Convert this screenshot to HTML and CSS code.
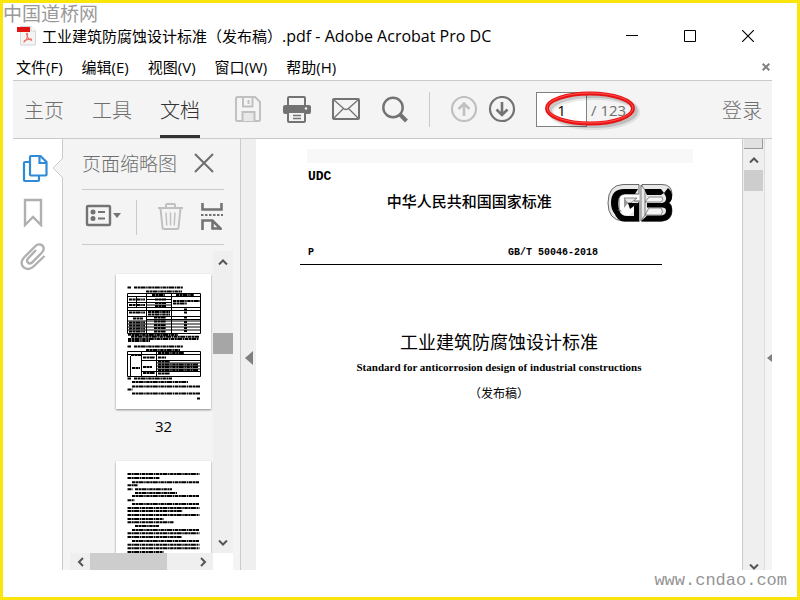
FILE: index.html
```html
<!DOCTYPE html>
<html lang="zh-CN">
<head>
	<meta charset="utf-8">
	<title>工业建筑防腐蚀设计标准（发布稿）.pdf - Adobe Acrobat Pro DC</title>
	<link rel="stylesheet" href="styles.css">
</head>
<body>

	<div class="frame">

		<div class="watermark-top">中国道桥网</div>

		<div class="app">

			<!-- 标题栏 -->
			<div class="titlebar">
				<svg class="pdf-icon" width="20" height="20" viewBox="0 0 20 20">
					<path d="M3.500 .5h10.500l4.500 4.500v14h-15z" fill="#f4f4f4" stroke="#d6d6d6"/>
					<path d="M14 .5v4.500h4.500" fill="#fff" stroke="#d6d6d6"/>
					<path d="M6.500 16.500c2.500-1.500 4-5 4-8.500-.2-1.400-1.200-1-.8.6.7 3 2.400 5 5.300 5.900M7 15c2-1.500 4.500-2.200 8-1.800" fill="none" stroke="#f0706c" stroke-width="1.200"/>
					<path d="M0 1h13v5H0z" fill="#e11414"/>
				</svg>
				<h1 class="title">工业建筑防腐蚀设计标准（发布稿）<span class="latin">.pdf - Adobe Acrobat Pro DC</span></h1>
				<div class="win-buttons">
					<button type="button" aria-label="最小化"><svg width="12" height="12"><path d="M0 5.500h12" stroke="#000"/></svg></button>
					<button type="button" aria-label="最大化"><svg width="12" height="12"><path d="M.5 .5h11v11h-11z" fill="none" stroke="#000"/></svg></button>
					<button type="button" aria-label="关闭"><svg width="12" height="12"><path d="M0 0l12 12M12 0L0 12" stroke="#000" stroke-width="1.200"/></svg></button>
				</div>
			</div>

			<!-- 菜单栏 -->
			<div class="menubar">
				<button type="button">文件(F)</button>
				<button type="button">编辑(E)</button>
				<button type="button">视图(V)</button>
				<button type="button">窗口(W)</button>
				<button type="button">帮助(H)</button>
				<button type="button" class="doc-close" aria-label="关闭文档"><svg width="8" height="8"><path d="M.7 .7l6.600 6.600M7.300 .7L.7 7.300" stroke="#808080" stroke-width="2"/></svg></button>
			</div>

			<!-- 工具栏 -->
			<div class="toolbar">
				<nav class="tabs">
					<a href="#home">主页</a>
					<a href="#tools">工具</a>
					<a href="#document" class="active">文档</a>
				</nav>
				<div class="tools">
					<button type="button" class="off" aria-label="保存">
						<svg width="28" height="28" viewBox="0 0 28 28" fill="none" stroke="currentColor" stroke-width="2">
							<path d="M3.500 1h17.500l5 5v17.500q0 1.500-1.500 1.500h-21q-1.500 0-1.500-1.500v-21q0-1.500 1.500-1.500z"/>
							<path d="M9 1v9.500h9.500V1M14.500 4v4"/>
							<path d="M8.500 25v-9h12v9" fill="#e8e8e8"/>
						</svg>
					</button>
					<button type="button" aria-label="打印">
						<svg width="28" height="28" viewBox="0 0 28 28" fill="none" stroke="currentColor" stroke-width="2">
							<path d="M5 10V2q0-1 1-1h15q1 0 1 1v8"/>
							<path d="M2 9h24q2 0 2 2v5q0 2-2 2h-24q-2 0-2-2v-5q0-2 2-2z" fill="currentColor" stroke="none"/>
							<path d="M5 16h17v9q0 1-1 1H6q-1 0-1-1z" fill="#f4f4f4"/>
							<path d="M5 12h17v4H5z" fill="currentColor" stroke="none"/>
							<circle cx="23" cy="12.500" r="1.200" fill="#f4f4f4" stroke="none"/>
							<path d="M10 19.500h8M10 22.500h8" stroke-width="1.300"/>
						</svg>
					</button>
					<button type="button" aria-label="邮件">
						<svg width="28" height="28" viewBox="0 0 28 28" fill="none" stroke="currentColor">
							<rect x="1" y="3" width="26" height="20" rx="1" stroke-width="2"/>
							<path d="M2 4l9 8q3 3 6 0l9-8M2 22l9.500-9.500M26 22l-9.500-9.500" stroke-width="1.300"/>
						</svg>
					</button>
					<button type="button" aria-label="查找">
						<svg width="28" height="28" viewBox="0 0 28 28" fill="none" stroke="currentColor">
							<circle cx="12" cy="11.500" r="9.700" stroke-width="2.400"/>
							<path d="M18.500 18l7 7" stroke-width="4"/>
						</svg>
					</button>
				</div>
				<div class="pager">
					<button type="button" class="off" aria-label="上一页">
						<svg width="28" height="28" viewBox="0 0 28 28" fill="none" stroke="currentColor" stroke-width="2.200">
							<circle cx="14" cy="13" r="12"/>
							<path d="M14 20V8M8.500 13l5.500-5.500 5.500 5.500" stroke-width="2.600"/>
						</svg>
					</button>
					<button type="button" aria-label="下一页">
						<svg width="28" height="28" viewBox="0 0 28 28" fill="none" stroke="currentColor" stroke-width="2.200">
							<circle cx="14" cy="13" r="12"/>
							<path d="M14 6v12M8.500 13.500l5.500 5.500 5.500-5.500" stroke-width="2.600"/>
						</svg>
					</button>
					<div class="page-no">
						<input type="text" id="page" value="1">
						<label for="page">/ 123</label>
						<svg class="circle-mark" width="104" height="46" viewBox="0 0 104 46">
							<ellipse cx="56" cy="25" rx="43" ry="15" fill="none" stroke="#000" stroke-opacity=".08" stroke-width="6"/>
							<ellipse cx="55" cy="24" rx="43" ry="15" fill="none" stroke="#000" stroke-opacity=".15" stroke-width="4"/>
							<ellipse cx="52" cy="21.500" rx="43" ry="15" fill="none" stroke="#e81212" stroke-width="4"/>
							<ellipse cx="52" cy="21" rx="43" ry="15" fill="none" stroke="#ff5050" stroke-width="1"/>
						</svg>
					</div>
				</div>
				<a href="#login" class="login">登录</a>
			</div>

			<div class="main">

				<!-- 左侧导航 -->
				<div class="rail">
					<button type="button" class="on" aria-label="页面缩略图">
						<svg width="28" height="30" viewBox="0 0 28 30" fill="none" stroke="currentColor" stroke-width="2.200">
							<path d="M9 9H5q-1 0-1 1v17q0 1 1 1h13q1 0 1-1v-4"/>
							<path d="M11 3h9.500l6 6v12.500q0 1-1 1H11q-1 0-1-1V4q0-1 1-1z"/>
							<path d="M19.500 3v7h7"/>
						</svg>
					</button>
					<button type="button" aria-label="书签">
						<svg width="28" height="30" viewBox="0 0 28 30" fill="none" stroke="currentColor" stroke-width="2.400">
							<path d="M5 3h16v25l-8-8-8 8z"/>
						</svg>
					</button>
					<button type="button" aria-label="附件">
						<svg width="28" height="30" viewBox="0 0 28 30" fill="none" stroke="currentColor" stroke-width="2.400">
							<path d="M16 9l-8 8.500c-2.500 3 1 6.500 4 4L22 11.500c5-5.500-2-11-6.500-6.500L4 16.500c-7 8 3 15.500 9.500 9L24.500 15"/>
						</svg>
					</button>
					<svg class="notch" width="11" height="20"><path d="M11 0L1 10l10 10" fill="#f4f4f4" stroke="#cdcdcd"/></svg>
				</div>

				<!-- 缩略图面板 -->
				<div class="panel">
					<div class="panel-head">
						<h2>页面缩略图</h2>
						<button type="button" aria-label="关闭面板"><svg width="20" height="20"><path d="M1 1l18 18M19 1L1 19" stroke="#6e6e6e" stroke-width="2"/></svg></button>
					</div>
					<div class="panel-tools">
						<button type="button" aria-label="选项">
							<svg width="39" height="28" viewBox="0 0 39 28" fill="none" stroke="currentColor">
								<rect x="5" y="3" width="23" height="19" rx="1" stroke-width="2.400"/>
								<path d="M16 9h7M16 15.500h7" stroke-width="2"/>
								<circle cx="11" cy="9" r="2.500" fill="currentColor" stroke="none"/>
								<circle cx="11" cy="15.500" r="2.500" fill="currentColor" stroke="none"/>
								<path d="M31 10h8l-4 5z" fill="currentColor" stroke="none"/>
							</svg>
						</button>
						<button type="button" class="off" aria-label="删除">
							<svg width="28" height="28" viewBox="0 0 28 28" fill="none" stroke="currentColor">
								<path d="M1 5h25M9 5V2q0-1 1-1h7q1 0 1 1v3M3.500 5.500l2 19q0 1.500 1.500 1.500h13q1.500 0 1.500-1.500l2-19" stroke-width="2"/>
								<path d="M9 9.500l.8 13M13.500 9.500v13M18 9.500l-.8 13" stroke-width="1.500"/>
							</svg>
						</button>
						<button type="button" aria-label="拆分">
							<svg width="24" height="28" viewBox="0 0 24 28" fill="none" stroke="currentColor" stroke-width="2.600">
								<path d="M2.500 0v6.500h19V0M2.500 27v-9.500h10l8 8V27M12.500 18v7.500h9"/>
								<path d="M1 12h22" stroke-width="2" stroke-dasharray="2.500 1.500"/>
							</svg>
						</button>
					</div>

					<div class="thumbs">
						<div class="thumb-list">
							<a href="#p32" class="thumb" aria-label="第 32 页">
								<svg viewBox="0 0 95 135">
									<g fill="none" stroke="#000" stroke-width="2" stroke-dasharray="3.500 .5 2.200 .4 5 .6 1.500 .5">
										<path d="M11.500 13.500h3.500M18 13.500h49M30 17.500h36"/>
										<path d="M13 25.500h16M13 31h16M13 38.500h16M17 44.500h10M13 48.500h16M13 51.500h16M13 54.500h16M13 57.500h16"/>
										<path d="M36 21h13M60 21h18M39 25.500h11M39 29h11M39 32h11M32 38h22M32 40.500h22M38 43.500h12M38 47.500h12M38 51h12M38 54h12M38 57.500h12"/>
										<path d="M57 27h27M57 29.500h14M68 35.500h3M68 38.500h3M68 43.500h3M68 48h3M68 51h3M68 54h3M68 57h3"/>
										<path d="M12 60.800h50M15 62.800h68M12 65h71M12 67h22"/>
										<path d="M11.500 72.500h3.500M18 72.500h49M30 76h34"/>
										<path d="M15 81h10M27 83.500h12M42 83.500h8M16 94h8M27 93h9M27 99h12M42 79h26M42 87.500h12M42 90.500h40M42 93h40M42 96h40M42 99.500h12"/>
										<path d="M11.500 104.500h3.500M18 104.500h38M16 108h56M16 112.500h68M11.500 115.500h5M16 119.500h68M81 124.500h3"/>
									</g>
									<g fill="none" stroke="#000">
										<path d="M11.500 19.500h73v40h-73zM30.500 19.500v40M55.500 19.500v40M11.500 22.500h73M11.500 28.500h44M11.500 33.500h73M11.500 36.500h73M11.500 42.500h73M30.500 45.500h54M11.500 47h73M11.500 50h73M11.500 53h73M11.500 56h73M20.500 22.500v11M30.500 25.500h25M30.500 31h25"/>
										<path d="M11.500 77.500h73v25h-73zM25.500 77.500v25M40.500 77.500v25M14.500 82v20M11.500 80.500h73M25.500 86.500h59M40.500 89h44M40.500 92h44M40.500 95h44M25.500 97.500h59"/>
									</g>
								</svg>
							</a>
							<div class="thumb-no">32</div>
							<a href="#p33" class="thumb" aria-label="第 33 页">
								<svg viewBox="0 0 95 135">
									<g fill="none" stroke="#000" stroke-width="2" stroke-dasharray="3.500 .5 2.200 .4 5 .6 1.500 .5">
										<path d="M11.500 13h72M11.500 17h32M16 21.300h67M11.500 24.300h10"/>
										<path d="M11.500 28.300h5M19 28.300h37M19 32h42M16 35h67M11.500 39.300h7"/>
										<path d="M16 43h67M11.500 47h72M11.500 50h55M11.500 54h72M11.500 58h36"/>
										<path d="M11.500 61.300h46M19 65h24M16 69h67M11.500 72.300h72M11.500 76h54"/>
										<path d="M16 80h67M11.500 83.700h72M11.500 87.300h72M11.500 91h36"/>
										<path d="M16 95h67M11.500 99h72M11.500 103h40"/>
									</g>
								</svg>
							</a>
						</div>
						<div class="vscroll">
							<button type="button" aria-label="向上"><svg width="10" height="6"><path d="M1 5.500l4-4 4 4" fill="none" stroke="#555" stroke-width="2"/></svg></button>
							<div class="track"><div class="bar bar-dark"></div></div>
							<button type="button" aria-label="向下"><svg width="10" height="6"><path d="M1 .5l4 4 4-4" fill="none" stroke="#555" stroke-width="2"/></svg></button>
						</div>
						<div class="hscroll">
							<button type="button" aria-label="向左"><svg width="7" height="10"><path d="M6 1L2 5l4 4" fill="none" stroke="#555" stroke-width="2"/></svg></button>
							<div class="track"><div class="bar"></div></div>
							<button type="button" aria-label="向右"><svg width="7" height="10"><path d="M1 1l4 4-4 4" fill="none" stroke="#555" stroke-width="2"/></svg></button>
						</div>
						<div class="corner"></div>
					</div>
				</div>

				<button type="button" class="splitter" aria-label="折叠面板"><svg width="8" height="14"><path d="M8 0v14L0 7z" fill="#808080"/></svg></button>

				<!-- 文档内容 -->
				<div class="doc">
					<div class="doc-strip"></div>
					<div class="doc-head">
						<div class="udc">UDC</div>
						<div class="nation">中华人民共和国国家标准</div>
						<svg class="gb" width="66" height="38" viewBox="0 0 66 38">
							<!-- 浅色斜面 -->
							<path d="M32 .5H16Q1 1 1 19q0 17 15 18h17V17H16v11l-4-2V14q1-4 6-4h14z" fill="#e8e8e8" stroke="#444" stroke-width=".8"/>
							<path d="M35 .5h20q10 0 10 10 0 6-3 8 3 2 3 8 0 10-10 10.500H35z" fill="#e8e8e8" stroke="#444" stroke-width=".8"/>
							<!-- 黑色斜面 -->
							<path d="M31 5l-3 5H17q-6 1-6 9 0 4 1 6l-4 5Q4 26 4 19 4 5 17 5z"/>
							<path d="M7 28l5-2q2 6 8 6h7V22l5-4v19.500H18Q10 37.500 7 28z"/>
							<path d="M37 5h17l3 4-3 2H40zM61 4q4 3 4 8 0 5-3 7 3 2 3 7 0 11-12 11.500H34l6-6h13q6 0 6-5 0-3-4-3H40V19h15q5-1 4-6l-2-4z"/>
							<!-- 中间 -->
							<path d="M15 14h12v13l-5 4h-5q-3-2-3-6z" fill="#fff"/>
							<path d="M17 14h13l-6 5h-4z" fill="#e8e8e8" stroke="#444" stroke-width=".6"/>
							<path d="M17 14v10l4-5z" fill="#999"/>
							<path d="M21 19h10l-8 6z"/>
							<path d="M42 13h13q2 3-1 5H38zM42 24h12q3 4 0 7H38z" fill="#f4f4f4" stroke="#444" stroke-width=".6"/>
							<path d="M34 1l4 5v25l-4 6z" fill="#e8e8e8" stroke="#333" stroke-width=".6"/>
							<path d="M32.500 1h1.500v36h-1.500z" fill="#aaa"/>
						</svg>
					</div>
					<div class="doc-code">
						<span>P</span>
						<span>GB/T 50046-2018</span>
					</div>
					<h2 class="doc-title">工业建筑防腐蚀设计标准</h2>
					<p class="doc-en">Standard for anticorrosion design of industrial constructions</p>
					<p class="doc-note">（发布稿）</p>
				</div>

				<div class="vscroll doc-scroll">
					<div class="split-box"></div>
					<button type="button" aria-label="向上滚动"><svg width="10" height="6"><path d="M1 5.500l4-4 4 4" fill="none" stroke="#555" stroke-width="2"/></svg></button>
					<div class="track"><div class="bar"></div></div>
					<button type="button" class="down" aria-label="向下滚动"><svg width="10" height="6"><path d="M1 .5l4 4 4-4" fill="none" stroke="#555" stroke-width="2"/></svg></button>
				</div>
				<button type="button" class="right-edge" aria-label="展开工具"><svg width="5" height="8"><path d="M5 0v8L0 4z" fill="#808080"/></svg></button>
			</div>
		</div>

		<div class="watermark-url">www.cndao.com</div>
	</div>

</body>
</html>
```
FILE: styles.css
```css
* {
	box-sizing: border-box;
}

body {
	margin: 0px;
	font-family: "Open Sans", "Noto Sans CJK SC", sans-serif;
	font-size: 15px;
	color: #000;
	background: #fff;
}

h1, h2, p {
	margin: 0px;
	font-weight: normal;
}

svg {
	display: block;
}

a {
	color: inherit;
	text-decoration: none;
}

button {
	display: flex;
	align-items: center;
	justify-content: center;
	margin: 0px;
	padding: 0px;
	border: none;
	background: none;
	font: inherit;
	color: #737373;
}

.off {
	color: #c0c0c0;
}

.frame {
	position: relative;
	display: flex;
	height: 100vh;
	padding: 17px 25px 27px 10px;
	border: 3px solid #fbe60b;
}

.app {
	flex: 1;
	min-width: 0;
	display: flex;
	flex-direction: column;
}

.watermark-top {
	position: absolute;
	top: 0px;
	left: 0px;
	font-family: "Noto Sans CJK SC", sans-serif;
	font-size: 19px;
	line-height: 20px;
	color: #999;
}

.watermark-url {
	position: absolute;
	right: 10px;
	bottom: 4px;
	font-family: "Liberation Mono", monospace;
	font-size: 17px;
	line-height: 24px;
	color: #949494;
}

/* 标题栏 */
.titlebar {
	display: flex;
	align-items: center;
	height: 32px;
	padding-left: 4px;
}

.title {
	flex: 1;
	padding-left: 5px;
	font-size: 15px;
	line-height: 20px;
	white-space: nowrap;
}

.latin {
	font-size: 16px;
}

.win-buttons {
	display: flex;
	gap: 46px;
	padding-right: 18px;
}

/* 菜单栏 */
.menubar {
	display: flex;
	align-items: center;
	gap: 19px;
	height: 29px;
	padding: 2px 2px 0px 3px;
	border-bottom: 1px solid #cacaca;
}

.menubar button {
	color: #000;
	line-height: 20px;
}

.menubar .doc-close {
	margin-left: auto;
}

/* 工具栏 */
.toolbar {
	display: flex;
	align-items: center;
	height: 58px;
	padding: 0px 10px 0px 11px;
	background: #f4f4f4;
	border-bottom: 1px solid #cacaca;
	color: #6e6e6e;
}

.tabs {
	display: flex;
	gap: 28px;
	align-self: stretch;
	font-size: 20px;
	font-weight: 300;
	line-height: 60px;
}

.tabs .active {
	color: #323232;
	border-bottom: 3px solid #323232;
}

.tools {
	display: flex;
	align-items: center;
	gap: 21px;
	height: 35px;
	padding: 0px 20px 0px 34px;
	border-right: 1px solid #cacaca;
}

.pager {
	display: flex;
	align-items: center;
	gap: 10px;
	padding-left: 20px;
}

.page-no {
	position: relative;
	display: flex;
	align-items: center;
	gap: 4px;
	margin-left: 10px;
}

.page-no input {
	width: 51px;
	height: 35px;
	padding: 0px;
	border: 1px solid #808080;
	border-radius: 0px;
	background: #fff;
	font: inherit;
	color: #000;
	text-align: center;
}

.circle-mark {
	position: absolute;
	top: -5px;
	left: 2px;
	pointer-events: none;
}

.login {
	margin-left: auto;
	font-size: 20px;
	font-weight: 300;
}

/* 主体 */
.main {
	flex: 1;
	min-height: 0;
	display: flex;
}

.rail {
	position: relative;
	display: flex;
	flex-direction: column;
	gap: 14px;
	width: 50px;
	padding: 14px 0px 0px 7px;
	border-right: 1px solid #cacaca;
}

.rail button {
	width: 28px;
	color: #b0b0b0;
}

.rail .on {
	color: #2f8ad8;
}

.notch {
	position: absolute;
	top: 19px;
	right: -1px;
}

.panel {
	display: flex;
	flex-direction: column;
	width: 178px;
	padding: 0px 7px;
	background: #f4f4f4;
	border-right: 1px solid #cacaca;
}

.panel-head {
	display: flex;
	align-items: center;
	gap: 17px;
	height: 51px;
	margin: 0px 9px 0px 12px;
	padding-bottom: 3px;
	border-bottom: 1px solid #cacaca;
	color: #6e6e6e;
}

.panel-head h2 {
	font-size: 19px;
	font-weight: 300;
	white-space: nowrap;
}

.panel-tools {
	display: flex;
	align-items: center;
	justify-content: space-between;
	height: 55px;
	margin: 0px 9px 6px 12px;
	border-bottom: 1px solid #cacaca;
}

.panel-tools .off {
	height: 35px;
	padding-left: 20px;
	border-left: 1px solid #cacaca;
}

.thumbs {
	flex: 1;
	min-height: 0;
	display: grid;
	grid-template-columns: 1fr 20px;
	grid-template-rows: 1fr 17px;
}

.thumb-list {
	display: flex;
	flex-direction: column;
	align-items: flex-end;
	padding: 23px 2px 0px 0px;
	overflow: hidden;
}

.thumb {
	flex: none;
	width: 95px;
	background: #fff;
	box-shadow: 0px 1px 2px #888;
}

.thumb-no {
	width: 95px;
	padding: 5px 0px 23px;
	line-height: 24px;
	text-align: center;
}

.corner {
	background: #fff;
}

.vscroll {
	display: flex;
	flex-direction: column;
	background: #efefef;
}

.vscroll button {
	height: 21px;
}

.vscroll .track {
	flex: 1;
	padding-top: 61px;
}

.vscroll .bar {
	height: 21px;
}

.hscroll {
	display: flex;
	background: #efefef;
}

.hscroll button {
	width: 20px;
}

.hscroll .track {
	flex: 1;
}

.hscroll .bar {
	width: 75%;
	height: 100%;
}

.bar {
	background: #cdcdcd;
}

.bar-dark {
	background: #a6a6a6;
}

.splitter {
	width: 15px;
	padding-top: 7px;
	background: #efefef;
}

/* 文档 */
.doc {
	flex: 1;
	min-width: 0;
	padding-top: 10px;
	background: #fff;
	text-align: center;
}

.doc-strip {
	height: 14px;
	margin: 0px 49px 0px 51px;
	background: #f8f8f8;
}

.doc-head {
	display: flex;
	justify-content: space-between;
	align-items: center;
	height: 76px;
	padding: 4px 69px 0px 52px;
}

.udc {
	align-self: flex-start;
	font-family: "Liberation Mono", monospace;
	font-size: 13px;
	font-weight: bold;
	line-height: 20px;
}

.nation {
	margin-top: -6px;
	font-family: "Noto Sans CJK SC", sans-serif;
	font-size: 15px;
	font-weight: 500;
}

.doc-code {
	display: flex;
	justify-content: space-between;
	margin: 0px 80px 0px 44px;
	padding: 5px 64px 2px 8px;
	border-bottom: 1px solid #000;
	font-family: "Liberation Mono", monospace;
	font-size: 10px;
	font-weight: bold;
	line-height: 18px;
}

.doc-title {
	padding-top: 63px;
	font-family: "Noto Sans CJK SC", sans-serif;
	font-size: 18px;
	line-height: 26px;
}

.doc-en {
	padding-top: 4px;
	font-family: "Liberation Serif", serif;
	font-size: 11px;
	font-weight: bold;
	line-height: 18px;
}

.doc-note {
	padding-top: 8px;
	font-family: "Noto Sans CJK SC", sans-serif;
	font-size: 12px;
	line-height: 18px;
}

.doc-scroll {
	width: 23px;
	padding: 0px 1px;
	border-left: 1px solid #cacaca;
	border-right: 1px solid #dcdcdc;
	overflow: hidden;
}

.doc-scroll .track {
	padding-top: 0px;
}

.doc-scroll .down {
	align-items: flex-end;
	height: 12px;
}

.split-box {
	height: 10px;
	background: #e1e1e1;
	border-right: 1px solid #999;
	border-bottom: 1px solid #999;
}

.right-edge {
	width: 7px;
	padding-top: 7px;
	background: #f4f4f4;
	justify-content: flex-end;
}
```
